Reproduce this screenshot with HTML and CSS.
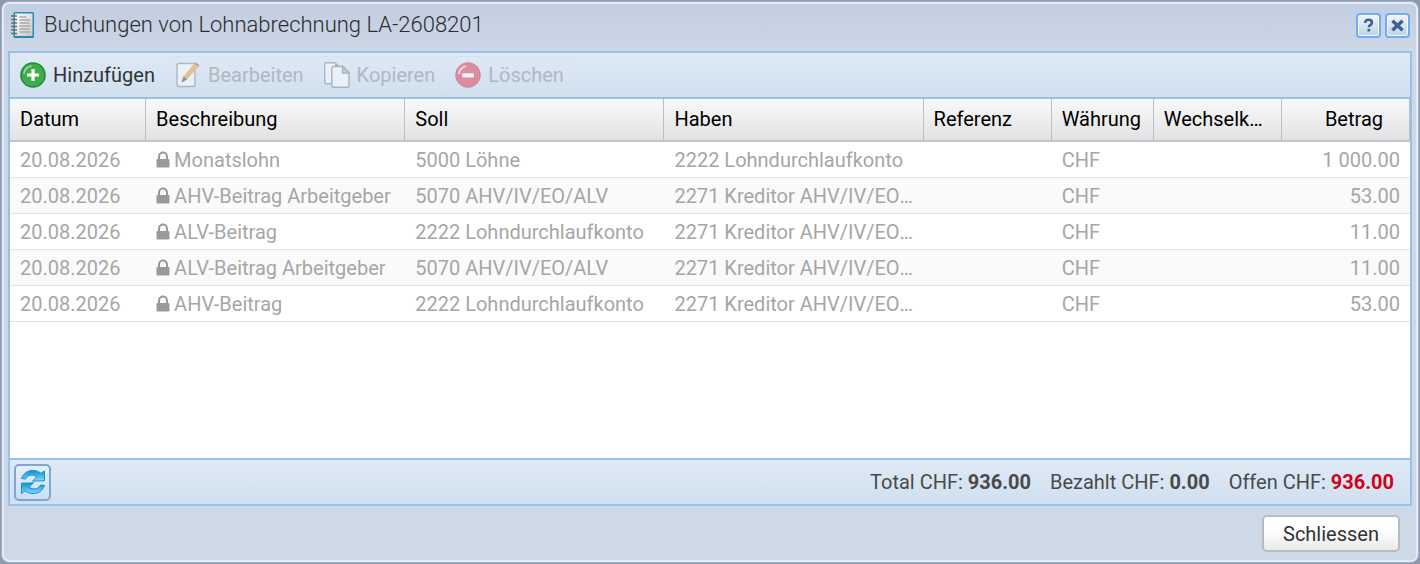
FILE: index.html
```html
<!DOCTYPE html>
<html lang="de">
<head>
<meta charset="utf-8">
<title>Buchungen von Lohnabrechnung LA-2608201</title>
<link rel="stylesheet" href="styles.css">
</head>
<body>
<svg class="defs" aria-hidden="true">
  <defs>
    <linearGradient id="paper" x1="0" y1="0" x2="1" y2="1"><stop offset="0" stop-color="#fdfdfd"/><stop offset="1" stop-color="#c9c9cb"/></linearGradient>
    <linearGradient id="arrow" x1="0" y1="0" x2="0" y2="1"><stop offset="0" stop-color="#0b8fcf"/><stop offset="1" stop-color="#8ad8f8"/></linearGradient>
    <symbol id="lock" viewBox="0 0 14 18"><path d="M3 9V5.500a4 4 0 0 1 8 0V9" fill="none" stroke="currentColor" stroke-width="2"/><rect x="0.500" y="8" width="13" height="8.500" rx="1" fill="currentColor"/></symbol>
  </defs>
</svg>
<main class="window">
  <header class="titlebar">
    <svg class="title-icon" viewBox="0 0 24 28" aria-hidden="true">
      <rect x="2.500" y="1" width="20.500" height="26" rx="1.500" fill="#2b87b8"/>
      <rect x="4" y="2.500" width="17.500" height="22.500" fill="url(#paper)"/>
      <path d="M8.500 6h7M8.500 9h11M8.500 12h10M8.500 15h11M8.500 18h10M8.500 21h11" stroke="#aaa" stroke-width="1.300"/>
      <path d="M0 5h6M0 8.500h6M0 12h6M0 15.500h6M0 19h6M0 22.500h6" stroke="#666e76" stroke-width="1.400"/>
    </svg>
    <h1 class="title">Buchungen von Lohnabrechnung LA-2608201</h1>
    <button class="tool" type="button" aria-label="Hilfe"><svg viewBox="0 0 20 20"><path d="M6 7C6 4.300 7.800 3.300 10 3.300s4.100 1.100 4.100 3.400c0 2.700-3.700 2.500-3.700 5.500" fill="none" stroke="#3b6095" stroke-width="3"/><rect x="8.800" y="14" width="3.200" height="3" fill="#3b6095"/></svg></button>
    <button class="tool" type="button" aria-label="Fenster schliessen"><svg viewBox="0 0 20 20"><path d="M4 4.500l12 11M16 4.500l-12 11" stroke="#3b6095" stroke-width="4"/></svg></button>
  </header>

  <section class="panel">
    <div class="toolbar">
      <button class="action" type="button">
        <svg viewBox="0 0 26 26" aria-hidden="true"><circle cx="13" cy="13" r="12" fill="#3fae4a" stroke="#248a3a" stroke-width="1.600"/><path d="M4 11a9 9 0 0 1 7-7" fill="none" stroke="#a5dda0" stroke-width="1.500" stroke-linecap="round"/><path d="M13 7v12M7 13h12" stroke="#fff" stroke-width="3.200"/></svg>
        <span>Hinzufügen</span>
      </button>
      <button class="action" type="button" disabled>
        <svg viewBox="0 0 26 26" aria-hidden="true"><rect x="2" y="1.500" width="18" height="23" rx="2" fill="#fff" stroke="#80868c" stroke-width="1.400"/><path d="M6.500 20.500l2-6L19 1.500l4.500 3.200L12 17.500z" fill="#f09a35"/><path d="M19 1.500l1.200-1.200 4.300 3-1 1.400z" fill="#7c5850"/><path d="M6.500 20.500l2-6 3.500 3z" fill="#3e3430"/></svg>
        <span>Bearbeiten</span>
      </button>
      <button class="action" type="button" disabled>
        <svg viewBox="0 0 26 26" aria-hidden="true"><path d="M2 .8h9l4 4v17H2a1.200 1.200 0 0 1-1.200-1.200V2A1.200 1.200 0 0 1 2 .8z" fill="#fff" stroke="#7b8187" stroke-width="1.400"/><path d="M11 1v4h5z" fill="#777e84"/><path d="M9 4.500h10l6 6V24a1.200 1.200 0 0 1-1.200 1.200H9A1.200 1.200 0 0 1 7.800 24V5.700A1.200 1.200 0 0 1 9 4.500z" fill="#fff" stroke="#7b8187" stroke-width="1.400"/><path d="M18.500 4.500v6.500H25z" fill="#bbb" stroke="#777e84" stroke-width="1.300"/></svg>
        <span>Kopieren</span>
      </button>
      <button class="action" type="button" disabled>
        <svg viewBox="0 0 26 26" aria-hidden="true"><circle cx="13" cy="13" r="12.300" fill="#de3046" stroke="#c41c38" stroke-width="1"/><path d="M4 11a9 9 0 0 1 6-6.500" fill="none" stroke="#ffd0d0" stroke-width="1.800" stroke-linecap="round"/><rect x="7" y="11.200" width="12" height="4.200" rx=".8" fill="#fff"/></svg>
        <span>Löschen</span>
      </button>
    </div>

    <div class="grid">
      <table class="bookings">
        <colgroup><col class="c-date"><col class="c-text"><col class="c-text"><col class="c-text"><col class="c-mid"><col class="c-cur"><col class="c-mid"><col class="c-mid"></colgroup>
        <thead>
          <tr><th>Datum</th><th>Beschreibung</th><th>Soll</th><th>Haben</th><th>Referenz</th><th>Währung</th><th>Wechselkurs</th><th class="amount">Betrag</th></tr>
        </thead>
        <tbody>
          <tr><td>20.08.2026</td><td><svg class="lock"><use href="#lock"/></svg>Monatslohn</td><td>5000 Löhne</td><td>2222 Lohndurchlaufkonto</td><td></td><td>CHF</td><td></td><td class="amount">1&nbsp;000.00</td></tr>
          <tr><td>20.08.2026</td><td><svg class="lock"><use href="#lock"/></svg>AHV-Beitrag Arbeitgeber</td><td>5070 AHV/IV/EO/ALV</td><td>2271 Kreditor AHV/IV/EO/ALV</td><td></td><td>CHF</td><td></td><td class="amount">53.00</td></tr>
          <tr><td>20.08.2026</td><td><svg class="lock"><use href="#lock"/></svg>ALV-Beitrag</td><td>2222 Lohndurchlaufkonto</td><td>2271 Kreditor AHV/IV/EO/ALV</td><td></td><td>CHF</td><td></td><td class="amount">11.00</td></tr>
          <tr><td>20.08.2026</td><td><svg class="lock"><use href="#lock"/></svg>ALV-Beitrag Arbeitgeber</td><td>5070 AHV/IV/EO/ALV</td><td>2271 Kreditor AHV/IV/EO/ALV</td><td></td><td>CHF</td><td></td><td class="amount">11.00</td></tr>
          <tr><td>20.08.2026</td><td><svg class="lock"><use href="#lock"/></svg>AHV-Beitrag</td><td>2222 Lohndurchlaufkonto</td><td>2271 Kreditor AHV/IV/EO/ALV</td><td></td><td>CHF</td><td></td><td class="amount">53.00</td></tr>
        </tbody>
      </table>
    </div>

    <div class="statusbar">
      <button class="refresh" type="button" aria-label="Aktualisieren">
        <svg viewBox="0 0 26 26" aria-hidden="true"><g fill="url(#arrow)" stroke="#0d92d2" stroke-width="1" stroke-linejoin="round"><path d="M1.500 9.500C3.500 4 8.500 1 14 1.500c3 .3 5 1.300 6.800 2.700L24.500 2v9.800l-12 .3 4.500-4.200C13 5 8 5.500 5.500 10z"/><path d="M24.500 16.500C22.500 22 17.500 25 12 24.500c-3-.3-5-1.300-6.800-2.700L1.500 24.500v-10.300l12-.3-4.500 4.200C13 21 18 20.500 20.500 16z"/></g></svg>
      </button>
      <div class="totals">
        <span>Total CHF: <b>936.00</b></span>
        <span>Bezahlt CHF: <b>0.00</b></span>
        <span>Offen CHF: <b class="open">936.00</b></span>
      </div>
    </div>
  </section>

  <footer class="footer"><button class="close" type="button">Schliessen</button></footer>
</main>
</body>
</html>
```

FILE: styles.css
```css
* { box-sizing: border-box; }
body {
  margin: 0;
  min-height: 100vh;
  display: flex;
  padding: 1px;
  background: #8e9aab;
  font: 20px/24px Roboto, sans-serif;
  color: #4a4a4a;
}
button { font: inherit; cursor: pointer; }
svg { display: block; flex: none; }
.defs { position: absolute; width: 0; height: 0; }

.window {
  flex: 1;
  min-width: 0;
  display: flex;
  flex-direction: column;
  padding: 0 6px;
  border: 1px solid #a2b2ca;
  border-radius: 8px;
  background: linear-gradient(#c1cde1, #cdd9e6 52px);
  box-shadow: inset 0 0 0 2px #e3eaf4;
}
.titlebar {
  display: flex;
  align-items: center;
  gap: 4px;
  height: 49px;
  padding: 0 2px 3px 3px;
}
.title-icon { width: 24px; height: 28px; }
.title { flex: 1; margin: 0 0 0 5px; font-size: 22px; line-height: 26px; font-weight: 300; color: #2c2c2c; }
.tool {
  width: 25px;
  height: 25px;
  padding: 2px;
  border: 2px solid #74aaf0;
  border-radius: 4px;
  background: linear-gradient(#f2f4f6, #b9d5e4);
  box-shadow: inset 0 0 0 1px #f6f9fc;
}
.tool svg { width: 17px; height: 17px; }

.panel {
  flex: 1;
  display: flex;
  flex-direction: column;
  border: 2px solid #99c0e8;
}
.toolbar, .statusbar {
  display: flex;
  align-items: center;
  background: linear-gradient(#dfe9f5, #d0e0ef);
}
.toolbar { gap: 4px; height: 46px; padding: 0 2px; border-bottom: 2px solid #99c0e8; }
.action {
  display: flex;
  align-items: center;
  gap: 7px;
  height: 38px;
  padding: 0 7px;
  border: 1px solid transparent;
  border-radius: 4px;
  background: none;
  color: #333;
}
.action svg { width: 26px; height: 26px; }
.action:disabled { border-color: #dbe3ea; color: #b0b8bf; cursor: default; }
.action:disabled svg { opacity: .48; }

.grid { flex: 1; background: #fff; }
.bookings { width: 100%; table-layout: fixed; border-collapse: separate; border-spacing: 0; }
.c-date { width: 136px; }
.c-text { width: 259px; }
.c-mid { width: 128px; }
.c-cur { width: 102px; }
th, td { overflow: hidden; padding: 0 10px; text-align: left; white-space: nowrap; text-overflow: ellipsis; }
th {
  height: 43px;
  padding-bottom: 1px;
  border-right: 1px solid #bebebe;
  border-bottom: 2px solid #c5c5c5;
  background: linear-gradient(#f9f9f9, #e1e2e4);
  color: #000;
  font-weight: 400;
}
td { height: 36px; padding-top: 1px; border-bottom: 1px solid #e4e4e4; color: #a6a6a6; }
tbody tr:nth-child(even) td { background: #fafafa; }
th.amount { padding-right: 26px; }
.amount { text-align: right; }
.lock { display: inline-block; width: 14px; height: 18px; margin-right: 4px; vertical-align: -2px; color: #999; }

.statusbar { justify-content: space-between; height: 46px; padding: 0 16px 0 4px; border-top: 2px solid #99c0e8; }
.refresh {
  display: grid;
  place-items: center;
  width: 37px;
  height: 37px;
  padding: 0;
  border: 2px solid #81a4d0;
  border-radius: 5px;
  background: linear-gradient(#e4effb, #c9dff5);
}
.refresh svg { width: 26px; height: 26px; }
.totals { display: flex; gap: 19px; }
.totals b { font-weight: 700; }
.open { color: #d0021b; }

.footer { display: flex; justify-content: flex-end; padding: 9px 12px 10px; }
.close {
  width: 138px;
  height: 37px;
  border: 2px solid #bbb;
  border-radius: 5px;
  background: linear-gradient(#fff 40%, #e9e9e9);
  color: #333;
}
```
